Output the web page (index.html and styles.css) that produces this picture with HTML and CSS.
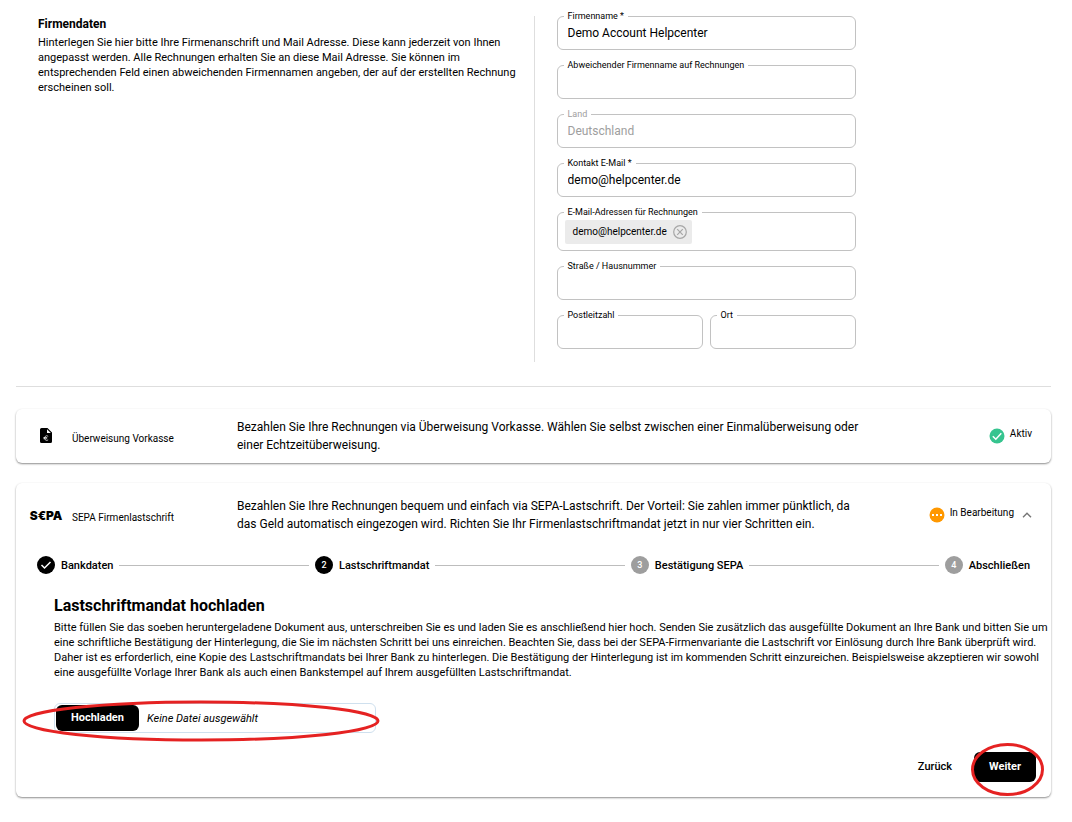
FILE: index.html
```
<!DOCTYPE html>
<html lang="de">
<head>
    <meta charset="UTF-8">
    <meta name="viewport" content="width=device-width, initial-scale=1.0">
    <title>Zahlungsdaten</title>
    <link rel="stylesheet" href="styles.css">
</head>
<body>

    <!-- Firmendaten -->
    <section class="company">
        <div class="company-info">
            <h2>Firmendaten</h2>
            <p>Hinterlegen Sie hier bitte Ihre Firmenanschrift und Mail Adresse. Diese kann jederzeit von Ihnen angepasst werden. Alle Rechnungen erhalten Sie an diese Mail Adresse. Sie können im entsprechenden Feld einen abweichenden Firmennamen angeben, der auf der erstellten Rechnung erscheinen soll.</p>
        </div>

        <form class="company-form">
            <div class="field">
                <label for="firma">Firmenname *</label>
                <input type="text" id="firma" value="Demo Account Helpcenter">
            </div>
            <div class="field">
                <label for="firma-rechnung">Abweichender Firmenname auf Rechnungen</label>
                <input type="text" id="firma-rechnung">
            </div>
            <div class="field disabled">
                <label for="land">Land</label>
                <input type="text" id="land" value="Deutschland" disabled>
            </div>
            <div class="field">
                <label for="email">Kontakt E-Mail *</label>
                <input type="email" id="email" value="demo@helpcenter.de">
            </div>
            <div class="field chips">
                <label for="email-rechnung">E-Mail-Adressen für Rechnungen</label>
                <span class="chip">
                    demo@helpcenter.de
                    <button type="button" class="chip-remove" aria-label="Entfernen">
                        <svg width="14" height="14" viewBox="0 0 14 14" fill="none" stroke="#a6a6a6" stroke-width="1.2">
                            <circle cx="7" cy="7" r="6.3"/>
                            <path d="M4.2 4.2l5.6 5.6M9.8 4.2l-5.6 5.6"/>
                        </svg>
                    </button>
                </span>
                <input type="email" id="email-rechnung">
            </div>
            <div class="field">
                <label for="strasse">Straße / Hausnummer</label>
                <input type="text" id="strasse">
            </div>
            <div class="field-row">
                <div class="field">
                    <label for="plz">Postleitzahl</label>
                    <input type="text" id="plz">
                </div>
                <div class="field">
                    <label for="ort">Ort</label>
                    <input type="text" id="ort">
                </div>
            </div>
        </form>
    </section>

    <!-- Vorkasse -->
    <section class="card">
        <div class="card-header">
            <div class="card-icon">
                <svg width="12" height="16" viewBox="0 0 12 16">
                    <path d="M1.5 0H7.5L12 4.5V13.5a1.5 1.5 0 0 1-1.5 1.5h-9A1.5 1.5 0 0 1 0 13.5v-12A1.5 1.5 0 0 1 1.5 0Z"/>
                    <path d="M7 1.2V5h3.8Z" fill="#fff"/>
                    <path d="M8.2 8.3A2.3 2.3 0 1 0 8.2 11.9M3.4 9.5h3.8M3.4 10.7h3.8" fill="none" stroke="#fff" stroke-width=".7"/>
                </svg>
            </div>
            <h3>Überweisung Vorkasse</h3>
            <p>Bezahlen Sie Ihre Rechnungen via Überweisung Vorkasse. Wählen Sie selbst zwischen einer Einmalüberweisung oder einer Echtzeitüberweisung.</p>
            <div class="status">
                <svg width="16" height="16" viewBox="0 0 16 16">
                    <circle cx="8" cy="8" r="7.5" fill="#36c48f"/>
                    <path d="M3.8 8.2l3 3 5.5-6" fill="none" stroke="#fff" stroke-width="1.5"/>
                </svg>
                <span>Aktiv</span>
            </div>
        </div>
    </section>

    <!-- SEPA Lastschrift -->
    <section class="card card-open">
        <div class="card-header">
            <div class="card-icon sepa-logo">S€PA</div>
            <h3>SEPA Firmenlastschrift</h3>
            <p>Bezahlen Sie Ihre Rechnungen bequem und einfach via SEPA-Lastschrift. Der Vorteil: Sie zahlen immer pünktlich, da das Geld automatisch eingezogen wird. Richten Sie Ihr Firmenlastschriftmandat jetzt in nur vier Schritten ein.</p>
            <div class="status">
                <svg width="16" height="16" viewBox="0 0 16 16">
                    <circle cx="8" cy="8" r="7.5" fill="#ff9800"/>
                    <path d="M3 7h2v2H3zM7 7h2v2H7zM11 7h2v2h-2z" fill="#fff"/>
                </svg>
                <span>In Bearbeitung</span>
                <button type="button" class="toggle" aria-label="Einklappen">
                    <svg width="10" height="6" viewBox="0 0 10 6" fill="none" stroke="#757575" stroke-width="1.4">
                        <path d="M1 5.3l4-4 4 4"/>
                    </svg>
                </button>
            </div>
        </div>

        <ol class="stepper">
            <li class="step done">
                <span class="step-icon">
                    <svg width="12" height="10" viewBox="0 0 12 10" fill="none" stroke="#fff" stroke-width="1.5">
                        <path d="M1.5 5l3 3L10.5 2"/>
                    </svg>
                </span>
                Bankdaten
            </li>
            <li class="step-line"></li>
            <li class="step done"><span class="step-icon">2</span>Lastschriftmandat</li>
            <li class="step-line"></li>
            <li class="step"><span class="step-icon">3</span>Bestätigung SEPA</li>
            <li class="step-line"></li>
            <li class="step"><span class="step-icon">4</span>Abschließen</li>
        </ol>

        <div class="step-content">
            <h2>Lastschriftmandat hochladen</h2>
            <p>Bitte füllen Sie das soeben heruntergeladene Dokument aus, unterschreiben Sie es und laden Sie es anschließend hier hoch. Senden Sie zusätzlich das ausgefüllte Dokument an Ihre Bank und bitten Sie um eine schriftliche Bestätigung der Hinterlegung, die Sie im nächsten Schritt bei uns einreichen. Beachten Sie, dass bei der SEPA-Firmenvariante die Lastschrift vor Einlösung durch Ihre Bank überprüft wird. Daher ist es erforderlich, eine Kopie des Lastschriftmandats bei Ihrer Bank zu hinterlegen. Die Bestätigung der Hinterlegung ist im kommenden Schritt einzureichen. Beispielsweise akzeptieren wir sowohl eine ausgefüllte Vorlage Ihrer Bank als auch einen Bankstempel auf Ihrem ausgefüllten Lastschriftmandat.</p>

            <div class="upload">
                <input type="file" id="mandat" class="upload-input">
                <label for="mandat" class="btn">Hochladen</label>
                <span class="upload-name">Keine Datei ausgewählt</span>
                <svg class="marker marker-upload" width="358" height="42" viewBox="0 0 358 42">
                    <ellipse cx="179" cy="21" rx="177" ry="19"/>
                </svg>
            </div>
        </div>

        <div class="actions">
            <button type="button" class="btn-text">Zurück</button>
            <div class="marked">
                <button type="button" class="btn btn-next">Weiter</button>
                <svg class="marker marker-next" width="73" height="53" viewBox="0 0 73 53">
                    <ellipse cx="36.5" cy="26.5" rx="35" ry="25"/>
                </svg>
            </div>
        </div>
    </section>

</body>
</html>
```

FILE: styles.css
```
* {
    box-sizing: border-box;
}

body {
    font-family: Roboto, "Liberation Sans", sans-serif;
    font-size: 11px;
    line-height: 15px;
    margin: 0;
    padding: 16px 21px 24px 16px;
    background-color: #fff;
    color: #000;
}

h2, h3, p, ol {
    margin: 0;
    padding: 0;
}

input, button {
    font-family: inherit;
    color: inherit;
    border: none;
    background: none;
    padding: 0;
}

/* Firmendaten */
.company {
    display: grid;
    grid-template-columns: 1fr 1fr;
    padding-bottom: 24px;
    border-bottom: 1px solid #dedede;
    margin-bottom: 22px;
}

.company-info {
    padding: 0 12px 0 22px;
}

.company-info h2 {
    font-size: 12px;
    font-weight: 700;
    line-height: 16px;
    margin-bottom: 3px;
}

.company-form {
    display: flex;
    flex-direction: column;
    gap: 15px;
    max-width: 322px;
    padding: 0 0 13px 22px;
    border-left: 1px solid #dedede;
}

.field {
    position: relative;
    display: flex;
    align-items: center;
    flex: 1;
    min-width: 0;
    min-height: 34px;
    padding: 0 10px;
    border: 1px solid #c2c2c2;
    border-radius: 6px;
}

.field label {
    position: absolute;
    top: -7px;
    left: 6px;
    padding: 0 4px;
    background-color: #fff;
    font-size: 9px;
    line-height: 12px;
}

.field input {
    flex: 1;
    min-width: 0;
    font-size: 12px;
    line-height: 18px;
    outline: none;
}

.field.disabled {
    color: #9e9e9e;
}

.field-row {
    display: flex;
    gap: 7px;
}

.field.chips {
    min-height: 39px;
    padding: 0 7px;
}

.chip {
    display: flex;
    align-items: center;
    gap: 6px;
    height: 24px;
    padding: 0 5px 0 8px;
    border-radius: 2px;
    background-color: #ebebeb;
    font-size: 10px;
}

.chip-remove, .toggle {
    display: flex;
    cursor: pointer;
}

/* Karten */
.card {
    border-radius: 6px;
    background-color: #fff;
    box-shadow: 0 1px 2px rgba(0, 0, 0, 0.45);
    margin-bottom: 20px;
    padding: 9px 0;
}

.card-open {
    padding: 14px 0 15px;
}

.card-header {
    display: grid;
    grid-template-columns: 36px 173px minmax(0, 634px) 1fr;
    align-items: center;
    padding: 0 19px 0 12px;
}

.card-icon {
    display: flex;
    justify-content: center;
}

.sepa-logo {
    font-family: Inter, sans-serif;
    font-size: 12px;
    font-weight: 900;
}

.card-header h3 {
    padding: 4px 8px 0;
    font-size: 10px;
    font-weight: 400;
}

.card-header p {
    font-size: 12px;
    line-height: 18px;
}

.status {
    display: flex;
    align-items: center;
    justify-content: flex-end;
    gap: 5px;
    font-size: 10px;
    white-space: nowrap;
}

.status span {
    padding-bottom: 6px;
}

.toggle {
    margin-left: 3px;
}

/* Schritte */
.stepper {
    display: flex;
    align-items: center;
    gap: 6px;
    list-style: none;
    margin-top: 23px;
    padding: 0 21px;
}

.step {
    display: flex;
    align-items: center;
    gap: 6px;
    font-weight: 500;
    white-space: nowrap;
}

.step-icon {
    display: flex;
    align-items: center;
    justify-content: center;
    width: 18px;
    height: 18px;
    border-radius: 50%;
    background-color: #9e9e9e;
    color: #fff;
    font-size: 9px;
}

.step.done .step-icon {
    background-color: #000;
}

.step-line {
    flex: 1;
    height: 1px;
    background-color: #bdbdbd;
}

.step-content {
    padding: 22px 0 0 38px;
}

.step-content h2 {
    font-size: 16px;
    font-weight: 700;
    line-height: 20px;
    margin-bottom: 4px;
}

.upload {
    position: relative;
    display: flex;
    align-items: center;
    gap: 8px;
    width: 322px;
    height: 30px;
    margin-top: 23px;
    padding: 0 1px;
    border: 1px solid #cfe0ee;
    border-radius: 6px;
}

.upload-input {
    position: absolute;
    width: 1px;
    height: 1px;
    opacity: 0;
}

.upload-name {
    font-style: italic;
}

.btn {
    padding: 5px 15px 6px;
    border-radius: 6px;
    background-color: #000;
    color: #fff;
    font-size: 11px;
    font-weight: 700;
    line-height: 15px;
    cursor: pointer;
}

.btn-next {
    display: block;
    height: 30px;
}

.btn-text {
    padding-bottom: 2px;
    font-size: 11px;
    font-weight: 500;
    cursor: pointer;
}

.actions {
    display: flex;
    align-items: center;
    justify-content: flex-end;
    gap: 22px;
    margin-top: 19px;
    padding-right: 15px;
}

.marked {
    position: relative;
}

/* Rote Markierungen */
.marker {
    position: absolute;
    fill: none;
    stroke: #e52222;
    stroke-width: 3px;
    pointer-events: none;
}

.marker-upload {
    top: -4px;
    left: -33px;
}

.marker-next {
    top: -9px;
    left: -3px;
}
```
